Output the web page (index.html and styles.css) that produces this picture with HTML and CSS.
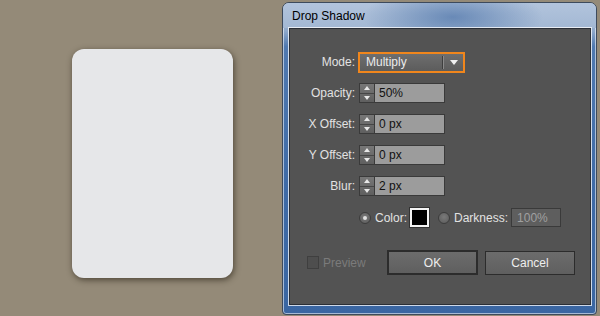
FILE: index.html
```html
<!DOCTYPE html>
<html lang="en">

    <head>
        <meta charset="UTF-8">
        <meta name="viewport" content="width=device-width, initial-scale=1.0">
        <title>Drop Shadow</title>
        <link rel="stylesheet" href="styles.css">
    </head>

    <body>
        <div class="stage">
            <div class="card"></div>
        </div>

        <div class="dialog">
            <div class="title">Drop Shadow</div>
            <div class="panel">
                <div class="row">
                    <div class="label">Mode:</div>
                    <div class="select">
                        <span class="select-text">Multiply</span>
                        <span class="select-sep"></span>
                        <span class="select-arrow"></span>
                    </div>
                </div>
                <div class="row">
                    <div class="label">Opacity:</div>
                    <div class="spin"><span class="up"></span><span class="down"></span></div>
                    <div class="field">50%</div>
                </div>
                <div class="row">
                    <div class="label">X Offset:</div>
                    <div class="spin"><span class="up"></span><span class="down"></span></div>
                    <div class="field">0 px</div>
                </div>
                <div class="row">
                    <div class="label">Y Offset:</div>
                    <div class="spin"><span class="up"></span><span class="down"></span></div>
                    <div class="field">0 px</div>
                </div>
                <div class="row">
                    <div class="label">Blur:</div>
                    <div class="spin"><span class="up"></span><span class="down"></span></div>
                    <div class="field">2 px</div>
                </div>

                <div class="color-row">
                    <span class="radio checked"></span>
                    <span class="text">Color:</span>
                    <span class="swatch"></span>
                    <span class="radio"></span>
                    <span class="text">Darkness:</span>
                    <span class="field small">100%</span>
                </div>

                <div class="button-row">
                    <span class="checkbox"></span>
                    <span class="preview">Preview</span>
                    <div class="button ok">OK</div>
                    <div class="button cancel">Cancel</div>
                </div>
            </div>
        </div>
    </body>

</html>
```

FILE: styles.css
```css
* {
    margin: 0;
    padding: 0;
    box-sizing: border-box;
}

body {
    width: 600px;
    height: 316px;
    overflow: hidden;
    display: flex;
    align-items: flex-start;
    background: #948a78;
    font-family: "Liberation Sans", Arial, sans-serif;
    font-size: 12px;
}

.stage {
    width: 282px;
    padding: 49px 0 0 72px;
}

.card {
    width: 161px;
    height: 229px;
    border-radius: 12px;
    background: #e6e7e9;
    box-shadow: 1px 2px 6px rgba(40, 32, 20, .65);
}

/* window frame */
.dialog {
    margin-top: 2px;
    width: 315px;
    height: 313px;
    display: flex;
    flex-direction: column;
    border: 1px solid #3d4a5c;
    border-radius: 7px 7px 4px 4px;
    background: linear-gradient(180deg, #a9bcd6 0%, #8ea8ca 9%, #4f79b0 14%, #3e6aa6 60%, #3a66a2 100%);
    box-shadow: inset 0 0 0 1px rgba(255, 255, 255, .55);
}

.title {
    height: 25px;
    padding: 6px 0 0 9px;
    color: #000;
    background: radial-gradient(ellipse 90px 30px at 170px 14px, rgba(70, 110, 165, .65), rgba(70, 110, 165, 0)),
                linear-gradient(180deg, #b2c4dc, #a3b8d4);
    border-radius: 6px 6px 0 0;
}

.panel {
    margin: 0 5px 0 6px;
    width: 302px;
    height: 277px;
    display: flex;
    flex-direction: column;
    padding-top: 23px;
    background: #535353;
    border: 1px solid #2b2f36;
    box-shadow: 0 0 0 1px rgba(255, 255, 255, .75);
}

/* form rows */
.row {
    display: flex;
    align-items: center;
    height: 20px;
    margin-bottom: 11px;
}

.label {
    width: 65px;
    margin-right: 3px;
    text-align: right;
    color: #e2e2e2;
}

.select {
    display: flex;
    align-items: center;
    width: 107px;
    height: 21px;
    border: 2px solid #f0861c;
    background: linear-gradient(180deg, #6e6e6e, #5c5c5c);
    color: #ececec;
}

.select-text {
    flex: 1;
    padding-left: 6px;
}

.select-sep {
    width: 2px;
    height: 13px;
    border-left: 1px solid #3e3e3e;
    border-right: 1px solid #8a8a8a;
}

.select-arrow {
    margin: 0 5px 0 6px;
    width: 0;
    height: 0;
    border-left: 4px solid transparent;
    border-right: 4px solid transparent;
    border-top: 5px solid #f0f0f0;
}

.spin {
    display: flex;
    flex-direction: column;
    width: 16px;
    height: 20px;
    margin-left: 1px;
    border: 1px solid #3a3a3a;
    background: linear-gradient(180deg, #777, #5f5f5f);
}

.spin span {
    flex: 1;
    display: flex;
    align-items: center;
    justify-content: center;
}

.spin .up {
    border-bottom: 1px solid #464646;
}

.spin .up::after,
.spin .down::after {
    content: '';
    border-left: 3px solid transparent;
    border-right: 3px solid transparent;
}

.spin .up::after {
    border-bottom: 4px solid #e8e8e8;
}

.spin .down::after {
    border-top: 4px solid #e8e8e8;
}

.field {
    width: 70px;
    height: 20px;
    padding: 2px 0 0 4px;
    border: 1px solid #3a3a3a;
    border-left: 0;
    background: #9c9c9c;
    color: #111;
}

/* colour line */
.color-row {
    display: flex;
    align-items: center;
    height: 19px;
    margin-top: 1px;
    padding-left: 69px;
}

.radio {
    width: 12px;
    height: 12px;
    border-radius: 50%;
    border: 1px solid #3c3c3c;
    background: radial-gradient(circle at 50% 40%, #7a7a7a, #5a5a5a);
    display: flex;
    align-items: center;
    justify-content: center;
}

.radio.checked::after {
    content: '';
    width: 4px;
    height: 4px;
    border-radius: 50%;
    background: #e0e0e0;
}

.color-row .text {
    margin: 0 3px 0 4px;
    color: #e2e2e2;
}

.swatch {
    width: 19px;
    height: 19px;
    margin-right: 9px;
    background: #000;
    border: 2px solid #f4f4f4;
    box-shadow: 0 0 0 1px #333;
}

.field.small {
    width: 50px;
    height: 19px;
    border-left: 1px solid #3a3a3a;
    background: #5e5e5e;
    color: #a0a0a0;
    padding-left: 5px;
}

/* bottom buttons */
.button-row {
    display: flex;
    align-items: center;
    margin-top: 23px;
    padding-left: 17px;
}

.checkbox {
    width: 12px;
    height: 13px;
    border: 1px solid #3f3f3f;
    background: #4e4e4e;
}

.preview {
    margin-left: 4px;
    width: 64px;
    color: #7b7b7b;
}

.button {
    display: flex;
    align-items: center;
    justify-content: center;
    color: #eee;
    background: linear-gradient(180deg, #6c6c6c, #5f5f5f);
}

.button.ok {
    width: 91px;
    height: 25px;
    border: 2px solid #2c2c2c;
}

.button.cancel {
    width: 90px;
    height: 24px;
    margin-left: 7px;
    border: 1px solid #2c2c2c;
}
```
